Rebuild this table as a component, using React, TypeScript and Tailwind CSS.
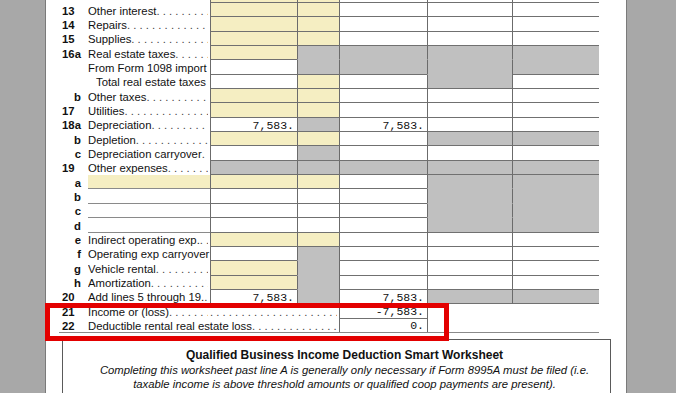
type Row = {
  num?: string
  letter?: string
  label?: string
  noDots?: boolean
  indent?: boolean
  input?: 'y' | 'w'
  cells: string
  v1?: string
  v3?: string
}

const rows: Row[] = [
  { num: '13', label: 'Other interest', cells: 'yywww' },
  { num: '14', label: 'Repairs', cells: 'yywww' },
  { num: '15', label: 'Supplies', cells: 'yywww' },
  { num: '16', letter: 'a', label: 'Real estate taxes', cells: 'yGGGG' },
  { label: 'From Form 1098 import', noDots: true, cells: 'wggGg' },
  { label: 'Total real estate taxes', indent: true, noDots: true, cells: 'wywgw' },
  { letter: 'b', label: 'Other taxes', cells: 'yywww' },
  { num: '17', label: 'Utilities', cells: 'yywww' },
  { num: '18', letter: 'a', label: 'Depreciation ', cells: 'wgwww', v1: '7,583.', v3: '7,583.' },
  { letter: 'b', label: 'Depletion', cells: 'yywgg' },
  { letter: 'c', label: 'Depreciation carryover ', cells: 'wgwww' },
  { num: '19', label: 'Other expenses', cells: 'ggggg' },
  { letter: 'a', input: 'y', cells: 'yywGG' },
  { letter: 'b', input: 'w', cells: 'wwwGG' },
  { letter: 'c', input: 'w', cells: 'wwwGG' },
  { letter: 'd', input: 'w', cells: 'wwwgg' },
  { letter: 'e', label: 'Indirect operating exp.', cells: 'yywww' },
  { letter: 'f', label: 'Operating exp carryover', noDots: true, cells: 'wGwww' },
  { letter: 'g', label: 'Vehicle rental', cells: 'yGwww' },
  { letter: 'h', label: 'Amortization', cells: 'yGwww' },
  { num: '20', label: 'Add lines 5 through 19.', cells: 'wgwgg', v1: '7,583.', v3: '7,583.' },
]

const widths = ['w-[87px]', 'w-[42px]', 'w-[88px]', 'w-[85px]', 'w-[87px]']
const DOTS = ' .'.repeat(60)

function Cell({ kind, col, value }: { kind: string; col: number; value?: string }) {
  const bg =
    kind === 'y' ? 'bg-[#f5eec2]' : kind === 'w' ? 'bg-white' : 'bg-[#c0c0c0]'
  const bottom = kind === 'G' ? 'border-b-transparent' : 'border-b-[#707070]'
  return (
    <div
      className={`${widths[col]} h-full border-l border-l-[#6b6b6b] border-b ${bottom} ${bg} flex items-center justify-end pt-[2px] pr-[3px] font-['Liberation_Mono',monospace] text-[11.5px] text-[#111]`}
    >
      {value}
    </div>
  )
}

function Num({ num, letter }: { num?: string; letter?: string }) {
  return (
    <div className="w-[29px] pl-[3px] pt-[2px] flex items-center font-bold">
      <span className="w-[12px]">{num}</span>
      <span className="w-[7px] text-right">{letter}</span>
    </div>
  )
}

function Label({ text, noDots, indent }: { text: string; noDots?: boolean; indent?: boolean }) {
  return (
    <div className={`w-[122px] flex items-center pt-[2px] pr-[2px] overflow-hidden ${indent ? 'pl-[8px]' : ''}`}>
      <span className="whitespace-nowrap">{text}</span>
      {!noDots && (
        <span className="flex-1 overflow-hidden whitespace-nowrap text-[#444]">{DOTS}</span>
      )}
    </div>
  )
}

function TableRow({ row }: { row: Row }) {
  return (
    <div className="flex h-[14.35px] items-stretch">
      <Num num={row.num} letter={row.letter} />
      {row.input ? (
        <div
          className={`w-[122px] border-b border-b-[#8a8a8a] ${row.input === 'y' ? 'bg-[#f5eec2]' : 'bg-white'}`}
        />
      ) : (
        <Label text={row.label ?? ''} noDots={row.noDots} indent={row.indent} />
      )}
      {row.cells.split('').map((k, i) => (
        <Cell key={i} kind={k} col={i} value={i === 0 ? row.v1 : i === 2 ? row.v3 : undefined} />
      ))}
    </div>
  )
}

export default function App() {
  return (
    <div className="relative w-[676px] h-[393px] overflow-hidden flex bg-[#a8a8a8] font-['Liberation_Sans',Arial,sans-serif] text-[11.3px] text-[#111] leading-none">
      <div className="w-[45px] shrink-0" />
      <div className="w-[582px] shrink-0 h-full bg-white border-x border-x-[#7a7a7a] pl-[13px]">
        <div className="w-[540px]">
          {/* tail of line 12 */}
          <div className="flex h-[3px]">
            <div className="w-[151px]" />
            {'yywww'.split('').map((k, i) => (
              <Cell key={i} kind={k} col={i} />
            ))}
          </div>
          {rows.map((r, i) => (
            <TableRow key={i} row={r} />
          ))}
          <div className="flex h-[14.35px] items-stretch">
            <Num num="21" />
            <Label text="Income or (loss)" />
            <div className="w-[129px] flex items-center pt-[2px] overflow-hidden pr-[2px]">
              <span className="flex-1 overflow-hidden whitespace-nowrap text-[#444]">{DOTS}</span>
            </div>
            <div className="w-[89px] border-x border-x-[#6b6b6b] border-b border-b-[#707070] flex items-center justify-end pt-[2px] pr-[3px] font-['Liberation_Mono',monospace] text-[11.5px]">
              -7,583.
            </div>
          </div>
          <div className="flex h-[14.35px] items-stretch border-b border-b-[#8a8a8a]">
            <Num num="22" />
            <div className="w-[251px] flex items-center pt-[2px] overflow-hidden pr-[2px]">
              <span className="whitespace-nowrap">Deductible rental real estate loss</span>
              <span className="flex-1 overflow-hidden whitespace-nowrap text-[#444]">{DOTS}</span>
            </div>
            <div className="w-[89px] border-x border-x-[#6b6b6b] flex items-center justify-end pt-[2px] pr-[3px] font-['Liberation_Mono',monospace] text-[11.5px]">
              0.
            </div>
          </div>
        </div>
        <div className="ml-[3px] mt-[6px] w-[549px] h-[80px] border border-[#5a5a5a] pt-[8px] pl-[16px] text-center">
          <div className="font-bold text-[12px] leading-[15px]">
            Qualified Business Income Deduction Smart Worksheet
          </div>
          <div className="italic leading-[14px]">
            Completing this worksheet past line A is generally only necessary if Form 8995A must be filed (i.e.
          </div>
          <div className="italic leading-[14px]">
            taxable income is above threshold amounts or qualified coop payments are present).
          </div>
        </div>
      </div>
      <div className="flex-1" />
      <div className="absolute left-[45px] top-[303px] w-[404px] h-[38px] border-[5px] border-[#e30000]" />
    </div>
  )
}
